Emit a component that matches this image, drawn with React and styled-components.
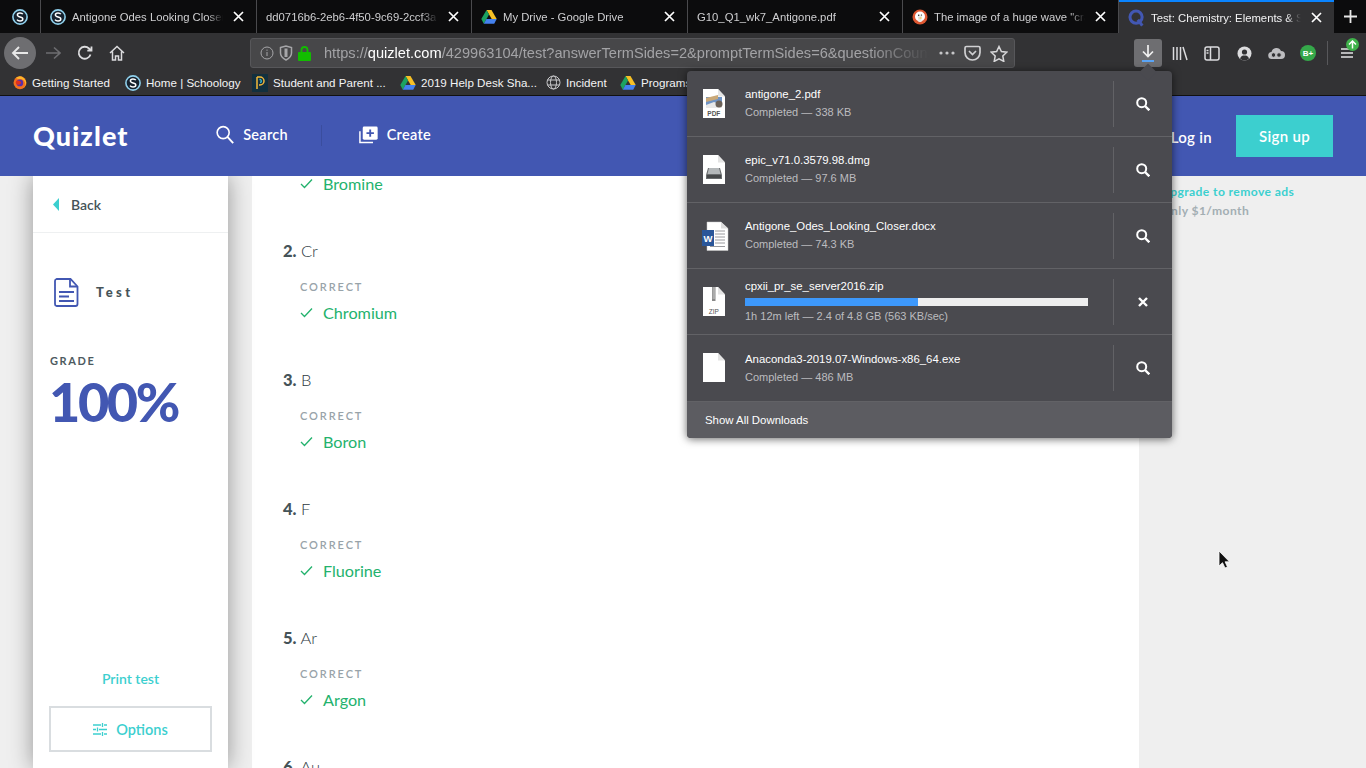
import React from 'react';
import styled, { createGlobalStyle } from 'styled-components';

const Global = createGlobalStyle`
  html, body { margin: 0; padding: 0; width: 1366px; height: 768px; overflow: hidden; background: #efefef; }
  #root { width: 1366px; height: 768px; }
  * { box-sizing: border-box; }
`;

const UI = `"Liberation Sans", Arial, sans-serif`;
const QZ = `Lato, "Open Sans", sans-serif`;

const Shell = styled.div`position: relative; width: 1366px; height: 768px; overflow: hidden; display: flex; flex-direction: column;`;

/* tabs */
const TabStrip = styled.div`height: 33px; flex: none; display: flex; background: #0c0c0d; font: 11.3px ${UI}; color: #cfcfd1;`;
const PinnedTab = styled.div`width: 41px; display: flex; align-items: center; justify-content: center; border-right: 1px solid #4a4a4d;`;
const Tab = styled.div`
  width: ${p => p.$w || 215}px; flex: none; display: flex; align-items: center; gap: 6px; padding: 0 12px 0 9px;
  border-right: ${p => p.$active ? 'none' : '1px solid #4a4a4d'};
  background: ${p => p.$active ? '#323234' : 'transparent'};
  border-top: ${p => p.$active ? '2px solid #0a84ff' : 'none'};
  color: ${p => p.$active ? '#f2f2f3' : '#cfcfd1'};
`;
const TabTitle = styled.span`
  flex: 1; min-width: 0; white-space: nowrap; overflow: hidden; margin-right: 4px;
  -webkit-mask-image: linear-gradient(90deg, #000 90%, transparent);
  mask-image: linear-gradient(90deg, #000 90%, transparent);
`;
const NewTab = styled.div`flex: 1; display: flex; align-items: center; justify-content: center;`;

/* toolbar */
const Toolbar = styled.div`height: 37px; flex: none; display: flex; align-items: center; padding-top: 3px; background: #323234; position: relative;`;
const NavGroup = styled.div`width: 250px; flex: none; display: flex; align-items: center; padding-left: 4px;`;
const NavBtn = styled.div`
  width: ${p => p.$w || 32}px; height: 32px; flex: none; display: flex; align-items: center; justify-content: center;
  border-radius: 50%; background: ${p => p.$circle ? '#6e6e71' : 'transparent'};
`;
const UrlBar = styled.div`
  width: 765px; height: 30px; flex: none; display: flex; align-items: center; padding: 0 6px 0 9px;
  background: #474749; border: 1px solid #57575a; border-radius: 3px; font: 14.6px ${UI}; color: #a3a3a6;
`;
const UrlIcons = styled.div`display: flex; align-items: center; gap: 5px; width: 64px; flex: none;`;
const UrlText = styled.div`
  flex: 1; min-width: 0; white-space: nowrap; overflow: hidden;
  -webkit-mask-image: linear-gradient(90deg, #000 90%, transparent);
  mask-image: linear-gradient(90deg, #000 90%, transparent);
  b { color: #fff; font-weight: 400; }
`;
const UrlActions = styled.div`display: flex; align-items: center; gap: 9px; margin-left: 10px; flex: none;`;
const ToolIcons = styled.div`flex: 1; display: flex; align-items: center; padding-left: 119px;`;
const ToolBtn = styled.div`
  width: ${p => p.$w || 32}px; height: 28px; flex: none; display: flex; align-items: center; justify-content: center; position: relative;
  border-radius: 3px;
  ${p => p.$active && 'width: 28px; background: #6e6e71; margin-right: 2px;'}
`;
const Sep = styled.div`width: 1px; height: 24px; background: #58585b; margin: 0 7px 0 3px;`;
const Badge = styled.div`position: absolute; top: -1px; right: 0; width: 13px; height: 13px; border-radius: 50%; background: #3fb24a; display: flex; align-items: center; justify-content: center;`;

/* bookmarks */
const Bookmarks = styled.div`height: 26px; flex: none; display: flex; align-items: center; padding-left: 13px; background: #323234; border-bottom: 1px solid #111; font: 11.6px ${UI}; color: #f4f4f5; white-space: nowrap;`;
const Bookmark = styled.div`display: flex; align-items: center; gap: 5px; width: ${p => p.$w}px; flex: none;`;

/* page */
const Header = styled.header`height: 80px; flex: none; display: flex; align-items: center; background: #4257b2; color: #fff; font: 600 14.5px ${QZ}; padding: 0 33px 0 33px; letter-spacing: .3px;`;
const Logo = styled.div`font: 900 27px ${QZ}; width: 183px; flex: none; letter-spacing: 1.1px; margin-top: -2px;`;
const HeadLink = styled.div`display: flex; align-items: center; gap: 9px; flex: none; width: ${p => p.$w}px; margin-top: -3px;`;
const HeadDivider = styled.div`width: 1px; height: 21px; background: #3a4d9e; margin: -2px 37px 0 33px;`;
const HeadSpacer = styled.div`flex: 1;`;
const Login = styled.div`margin-right: 24px; font-size: 15px; margin-top: 2px;`;
const SignUp = styled.div`width: 97px; height: 42px; background: #3ccfcf; display: flex; align-items: center; justify-content: center; font-size: 15px;`;

const Page = styled.div`flex: 1; min-height: 0; overflow: hidden; display: grid; grid-template-columns: 195px 911px 1fr; padding-left: 33px; background: #efefef; font-family: ${QZ};`;
const Side = styled.aside`position: relative; display: flex; flex-direction: column; background: #fff; box-shadow: 0 0 22px rgba(0,0,0,.38);`;
const SideBack = styled.div`height: 57px; flex: none; display: flex; align-items: center; gap: 12px; padding-left: 20px; border-bottom: 1px solid #eef0f1; font: 600 14px ${QZ}; color: #455358;`;
const SideTitle = styled.div`display: flex; align-items: center; gap: 17px; padding: 45px 0 0 21px; font: 900 13px/27px ${QZ}; letter-spacing: 3.4px; color: #455358;`;
const GradeLabel = styled.div`margin: 47px 0 0 17px; font: 700 11px ${QZ}; letter-spacing: 1.6px; color: #4d5a60;`;
const Grade = styled.div`margin: 6px 0 0 16px; font: 900 54px/57px ${QZ}; color: #4257b2; letter-spacing: -2.4px;`;
const SideBottom = styled.div`margin-top: auto; padding: 0 16px 16px; display: flex; flex-direction: column; align-items: center;`;
const PrintLink = styled.div`font: 600 14px ${QZ}; color: #3ccfcf; margin-bottom: 19px;`;
const OptionsBtn = styled.div`width: 163px; height: 46px; border: 2px solid #d9dde0; display: flex; align-items: center; justify-content: center; gap: 9px; font: 600 14.5px ${QZ}; color: #3ccfcf;`;

const Main = styled.main`background: #fff; margin-left: 24px; width: 887px; padding-left: 31px; display: flex; flex-direction: column; gap: 46px; overflow: hidden;`;
const Question = styled.section`display: flex; flex-direction: column; flex: none;`;
const QTitle = styled.div`height: 24px; line-height: 26px; font-size: 16.5px; color: #2e3a3f; font-weight: 300; b { font-weight: 900; color: #455358; }`;
const CorrectLabel = styled.div`height: 14px; line-height: 14px; margin: 18px 0 11px 17px; font-size: 11px; font-weight: 600; letter-spacing: 1.9px; color: #98a3a9;`;
const Answer = styled.div`height: 16px; line-height: 16px; margin-left: 17px; display: flex; align-items: center; gap: 10px; font-size: 16.2px; color: #23b26d; font-weight: 400;`;

const Aside = styled.aside`padding: 6px 0 0 22px; font: 700 12.1px/19px ${QZ}; letter-spacing: .4px;`;
const Upgrade = styled.div`color: #3ccfcf;`;
const Price = styled.div`color: #a3aeb3;`;

/* download popup */
const Popup = styled.div`position: absolute; left: 687px; top: 71px; width: 485px; height: 367px; background: #4a4a4f; border-radius: 4px; box-shadow: 0 1px 8px rgba(0,0,0,.6); font: 11.4px ${UI}; color: #fff; display: flex; flex-direction: column; z-index: 5;`;
const PopupArrow = styled.div`position: absolute; left: 455px; top: -5px; width: 12px; height: 12px; background: #4a4a4f; transform: rotate(45deg);`;
const DlRow = styled.div`height: 66px; flex: none; display: flex; align-items: center; position: relative; border-bottom: 1px solid #626266; &:nth-of-type(6) { height: 67px; }`;
const DlIcon = styled.div`width: 58px; padding-left: 15px; flex: none; display: flex;`;
const DlInfo = styled.div`width: 368px; flex: none; display: flex; flex-direction: column; gap: ${p => p.$progress ? 0 : 5}px; margin-top: ${p => p.$progress ? -1 : 0}px;`;
const DlName = styled.div`line-height: 13px; white-space: nowrap;`;
const DlStatus = styled.div`line-height: 13px; font-size: 11px; color: #bcbcbf; white-space: nowrap;`;
const Progress = styled.div`width: 343px; height: 8px; background: #eee; margin: 5px 0 4px;`;
const ProgressFill = styled.div`height: 100%; background: #3d98fb;`;
const DlAction = styled.div`height: 46px; flex: 1; display: flex; align-items: center; justify-content: center; border-left: 1px solid #626266;`;
const PopupFooter = styled.div`flex: 1; display: flex; align-items: center; padding-left: 18px; background: #5c5c61; border-radius: 0 0 4px 4px;`;
const Cursor = styled.svg`position: absolute; left: 1218px; top: 550px; z-index: 6;`;

/* icons */
const Schoology = ({ s = 16 }) => (
  <svg width={s} height={s} viewBox="0 0 16 16" style={{ flex: 'none' }}>
    <circle cx="8" cy="8" r="7.1" fill="#16222e" stroke="#8fd0ec" strokeWidth="1.6" />
    <path d="M10.8 5.2C10.2 4.3 9.2 4 8 4 6.5 4 5.4 4.8 5.4 6c0 2.6 5.4 1.4 5.4 4 0 1.3-1.2 2-2.8 2-1.4 0-2.4-.5-3-1.4" fill="none" stroke="#fff" strokeWidth="1.5" />
  </svg>
);
const Drive = ({ s = 16 }) => (
  <svg width={s} height={s} viewBox="0 0 16 15" style={{ flex: 'none' }}>
    <polygon points="5.5,0.5 10.5,0.5 15.7,9.6 10.7,9.6" fill="#f6c025" />
    <polygon points="5.5,0.5 0.3,9.6 2.8,14.2 8,5" fill="#1ca261" />
    <polygon points="2.8,14.2 13.2,14.2 15.7,9.6 5.4,9.6" fill="#4481ee" />
  </svg>
);
const FirefoxIcon = () => (
  <svg width="14" height="15" viewBox="0 0 16 16" style={{ flex: 'none' }}>
    <circle cx="8" cy="8.3" r="7.4" fill="#f2711f" />
    <path d="M3 2c1 2 3 2 5 2 4 0 6 3 6 6 0 2-1 3-2 4 3-2 3.500-6 2.500-8C13 3 10 .5 7 1 5 1.300 4 2.800 3 2Z" fill="#fdb62a" />
    <circle cx="7.800" cy="8.500" r="3.900" fill="#5a2fa8" />
    <path d="M4 6c2-1 4 0 5 1.500S7 12 4.500 10 3.500 7 4 6Z" fill="#e0301e" />
  </svg>
);
const PowerSchool = () => (
  <svg width="16" height="18" viewBox="0 0 16 18" style={{ flex: 'none' }}>
    <rect width="16" height="18" fill="#12303f" />
    <path d="M5 3v12M5 3h3a4 4 0 0 1 0 8H7" fill="none" stroke="#f4b93a" strokeWidth="1.500" />
    <path d="M7.500 5.500h.7a1.700 1.700 0 0 1 0 3.200" fill="none" stroke="#39c0d8" strokeWidth="1.300" />
  </svg>
);
const Globe = () => (
  <svg width="15" height="15" viewBox="0 0 15 15" fill="none" stroke="#c8c8ca" strokeWidth="1" style={{ flex: 'none' }}>
    <circle cx="7.500" cy="7.500" r="6.500" /><ellipse cx="7.500" cy="7.500" rx="3" ry="6.500" />
    <path d="M1.500 5h12M1.500 10h12" />
  </svg>
);
const Duck = () => (
  <svg width="16" height="16" viewBox="0 0 16 16" style={{ flex: 'none' }}>
    <circle cx="8" cy="8" r="7.500" fill="#de5833" />
    <circle cx="8" cy="7.500" r="5" fill="#fff" />
    <path d="M6 5.500c-1 2 .5 4 .5 7.500h3c.5-2 0-3-1-4 1-.5 2-1 1.500-3.500Z" fill="#e9e9e9" />
    <path d="M6.500 9l3-.7v1.500Z" fill="#f5c02c" />
    <circle cx="6.700" cy="6.300" r=".7" fill="#222" /><circle cx="9.500" cy="6" r=".6" fill="#222" />
  </svg>
);
const QIcon = () => (
  <svg width="17" height="18" viewBox="0 0 19 20" style={{ flex: 'none' }} fill="none">
    <circle cx="9" cy="9" r="6.800" stroke="#4257b2" strokeWidth="3.400" />
    <path d="M11 12l5 6.500" stroke="#4257b2" strokeWidth="3.400" />
  </svg>
);
const Close = ({ c = '#fff' }) => (
  <svg width="11" height="11" viewBox="0 0 11 11" style={{ flex: 'none' }}><path d="M1 1l9 9M10 1l-9 9" stroke={c} strokeWidth="1.700" /></svg>
);
const Stroke = ({ w = 16, h = 16, vb, c = '#e3e3e5', sw = 1.600, children }) => (
  <svg width={w} height={h} viewBox={vb || `0 0 ${w} ${h}`} fill="none" stroke={c} strokeWidth={sw} style={{ flex: 'none' }}>{children}</svg>
);
const SearchGlyph = () => (
  <svg width="14" height="14" viewBox="0 0 14 14" fill="none" stroke="#fff" strokeWidth="2"><circle cx="5.700" cy="5.700" r="4.500" /><path d="M9 9l4.300 4.300" strokeWidth="2.400" /></svg>
);
const CancelGlyph = () => (
  <svg width="10" height="10" viewBox="0 0 10 10"><path d="M1 1l8 8M9 1L1 9" stroke="#fff" strokeWidth="2.400" /></svg>
);
const PageFile = ({ children }) => (
  <svg width="24" height="30" viewBox="0 0 24 30">
    <path d="M0 0h15l7 7.500v21.500H0Z" fill="#fff" transform="translate(1 0)" />
    <path d="M16 0v7.500h7" fill="#e4e4e4" />
    {children}
  </svg>
);
const PdfFile = () => (
  <PageFile>
    <rect x="4" y="8" width="16" height="11" fill="#6f93c4" />
    <path d="M4 9l12-3v4l-12 3Z" fill="#c9a878" />
    <path d="M4 16l8-3 8 3v3H4Z" fill="#e8e8e8" />
    <circle cx="17" cy="15" r="3.500" fill="#6b6158" />
    <text x="11.800" y="27" fontSize="6.500" fontWeight="700" textAnchor="middle" fill="#555" fontFamily="Liberation Sans">PDF</text>
  </PageFile>
);
const DmgFile = () => (
  <PageFile>
    <path d="M6 13h12l2 7v4H4v-4Z" fill="#6a6d6f" />
    <path d="M7 13h10l1.500 6h-13Z" fill="#b4b8ba" />
    <rect x="5" y="20" width="14" height="3" fill="#47494b" />
  </PageFile>
);
const DocFile = () => (
  <svg width="27" height="30" viewBox="0 0 27 30">
    <path d="M5 1h14l7 6.500v22H5Z" fill="#fff" stroke="#c9c9c9" strokeWidth=".5" />
    <path d="M19 1v6.500h7" fill="#ddd" />
    <path d="M13 10h10M13 13h10M13 16h10M13 19h10M13 22h10M8 25.500h15" stroke="#9a9a9e" strokeWidth="1" />
    <rect x="0" y="9" width="12" height="16" fill="#2a5699" />
    <text x="6" y="20.500" fontSize="9.500" fontWeight="700" textAnchor="middle" fill="#fff" fontFamily="Liberation Sans">W</text>
  </svg>
);
const ZipFile = () => (
  <PageFile>
    <rect x="10" y="0" width="3.500" height="14" fill="#888" />
    <path d="M10.500 1h2.500M10.500 3h2.500M10.500 5h2.500M10.500 7h2.500M10.500 9h2.500M10.500 11h2.500" stroke="#eee" strokeWidth=".7" />
    <text x="11.800" y="27" fontSize="6.500" textAnchor="middle" fill="#555" fontFamily="Liberation Sans">ZIP</text>
  </PageFile>
);
const Check = () => (
  <svg width="13" height="11" viewBox="0 0 13 11" fill="none" stroke="#23b26d" strokeWidth="1.300" style={{ flex: 'none', marginTop: -2 }}><path d="M1 6l3.500 3.500L12 1.500" /></svg>
);

const tabs = [
  { icon: <Schoology />, title: 'Antigone Odes Looking Closer', w: 216 },
  { title: 'dd0716b6-2eb6-4f50-9c69-2ccf3a', w: 215 },
  { icon: <Drive />, title: 'My Drive - Google Drive', w: 216 },
  { title: 'G10_Q1_wk7_Antigone.pdf', w: 215 },
  { icon: <Duck />, title: 'The image of a huge wave "crash', w: 216 },
  { icon: <QIcon />, title: 'Test: Chemistry: Elements & Symbols', w: 215, active: true },
];
const marks = [
  { icon: <FirefoxIcon />, label: 'Getting Started', w: 112 },
  { icon: <Schoology />, label: 'Home | Schoology', w: 127 },
  { icon: <PowerSchool />, label: 'Student and Parent ...', w: 148 },
  { icon: <Drive />, label: '2019 Help Desk Sha...', w: 146 },
  { icon: <Globe />, label: 'Incident', w: 74 },
  { icon: <Drive />, label: 'Programs', w: 80 },
];
const questions = [
  ['2.', 'Cr', 'Chromium'], ['3.', 'B', 'Boron'], ['4.', 'F', 'Fluorine'], ['5.', 'Ar', 'Argon'], ['6.', 'Au', 'Gold'],
];
const downloads = [
  { icon: <PdfFile />, name: 'antigone_2.pdf', status: 'Completed — 338 KB' },
  { icon: <DmgFile />, name: 'epic_v71.0.3579.98.dmg', status: 'Completed — 97.6 MB' },
  { icon: <DocFile />, name: 'Antigone_Odes_Looking_Closer.docx', status: 'Completed — 74.3 KB' },
  { icon: <ZipFile />, name: 'cpxii_pr_se_server2016.zip', status: '1h 12m left — 2.4 of 4.8 GB (563 KB/sec)', progress: 50.5 },
  { icon: <PageFile />, name: 'Anaconda3-2019.07-Windows-x86_64.exe', status: 'Completed — 486 MB' },
];

export default function App() {
  return (
    <Shell>
      <Global />
      <TabStrip>
        <PinnedTab><Schoology /></PinnedTab>
        {tabs.map(t => (
          <Tab key={t.title} $w={t.w} $active={t.active}>
            {t.icon}
            <TabTitle>{t.title}</TabTitle>
            <Close />
          </Tab>
        ))}
        <NewTab>
          <svg width="13" height="13" viewBox="0 0 13 13"><path d="M6.500 0v13M0 6.500h13" stroke="#e8e8e8" strokeWidth="1.800" /></svg>
        </NewTab>
      </TabStrip>

      <Toolbar>
        <NavGroup>
          <NavBtn $circle>
            <Stroke w={18} h={16} c="#e8e8e8" sw={1.900}><path d="M17 8H2M8 2L2 8l6 6" /></Stroke>
          </NavBtn>
          <NavBtn $w={33}><Stroke w={16} h={14} c="#6d6d70" sw={1.600}><path d="M1 7h14M9 1.500L15 7l-6 5.500" /></Stroke></NavBtn>
          <NavBtn><Stroke w={16} h={16} c="#dcdcde" sw={1.800}><path d="M13.500 9.500a6 6 0 1 1-1.500-6l2 2M14.500 1.500v4.200h-4.200" /></Stroke></NavBtn>
          <NavBtn><Stroke w={16} h={16} c="#dcdcde" sw={1.500}><path d="M1 8l7-6.500L15 8M3.500 6.500V15h3v-4h3v4h3V6.500" /></Stroke></NavBtn>
        </NavGroup>
        <UrlBar>
          <UrlIcons>
            <Stroke w={14} h={14} c="#a6a6a9" sw={1}><circle cx="7" cy="7" r="6" /><path d="M7 6v4M7 3.600v1.200" /></Stroke>
            <Stroke w={14} h={16} c="#a6a6a9" sw={1.500}><path d="M1.500 2.500L7 1l5.500 1.500V8c0 3-2.500 5.500-5.500 7-3-1.500-5.500-4-5.500-7Z" /><path d="M7 3.500V12" strokeWidth="3" /></Stroke>
            <svg width="13" height="15" viewBox="0 0 13 15"><rect y="6" width="13" height="9" rx="1" fill="#12bc00" /><path d="M3.500 6.500V4a3 3 0 0 1 6 0v2.500" fill="none" stroke="#12bc00" strokeWidth="1.800" /></svg>
          </UrlIcons>
          <UrlText>https://<b>quizlet.com</b>/429963104/test?answerTermSides=2&amp;promptTermSides=6&amp;questionCount=20&amp;questionTypes=4</UrlText>
          <UrlActions>
            <Stroke w={16} h={4} c="#c6c6c8" sw={0}><g fill="#c6c6c8"><circle cx="2" cy="2" r="1.600" /><circle cx="8" cy="2" r="1.600" /><circle cx="14" cy="2" r="1.600" /></g></Stroke>
            <Stroke w={17} h={16} c="#d0d0d2" sw={1.700}><path d="M1 3a1.500 1.500 0 0 1 1.500-1.500h12A1.500 1.500 0 0 1 16 3v4.500a7.500 7.500 0 0 1-15 0Z" /><path d="M5 6l3.500 3.500L12 6" /></Stroke>
            <Stroke w={18} h={17} c="#d8d8da" sw={1.500}><path d="M9 1.500l2.400 5 5.400.7-4 3.800 1 5.400L9 13.800l-4.800 2.600 1-5.400-4-3.800 5.400-.7Z" /></Stroke>
          </UrlActions>
        </UrlBar>
        <ToolIcons>
          <ToolBtn $active>
            <Stroke w={14} h={18} c="#f0f0f0" sw={1.700}><path d="M7 1v11M2 7.500L7 12.500l5-5" /><path d="M1 17h12" stroke="#5aa4f5" strokeWidth="2" /></Stroke>
          </ToolBtn>
          <ToolBtn><Stroke w={16} h={15} c="#dcdcde" sw={1.500}><path d="M1.500 1v13M5 1v13M8.500 1v13M11 1l4 13" /></Stroke></ToolBtn>
          <ToolBtn><Stroke w={16} h={15} c="#dcdcde" sw={1.500}><rect x="1" y="1" width="14" height="13" rx="2" /><path d="M6.500 1v13M2.500 4.500h2M2.500 7h2" /></Stroke></ToolBtn>
          <ToolBtn><svg width="15" height="15" viewBox="0 0 15 15"><circle cx="7.500" cy="7.500" r="7" fill="#dcdcde" /><circle cx="7.500" cy="6" r="2.600" fill="#323234" /><path d="M3 12.500c1-2.500 2.500-3 4.500-3s3.500.5 4.500 3a6 6 0 0 1-9 0Z" fill="#323234" /></svg></ToolBtn>
          <ToolBtn><svg width="17" height="14" viewBox="0 0 17 14"><path d="M4 13a3.500 3.500 0 0 1-.5-7 5 5 0 0 1 9.500-1 4 4 0 0 1 0 8Z" fill="#bdbdc0" /><circle cx="5.500" cy="9" r="2.300" fill="#323234" stroke="#bdbdc0" /><circle cx="11" cy="9" r="2.300" fill="#323234" stroke="#bdbdc0" /></svg></ToolBtn>
          <ToolBtn><svg width="16" height="16" viewBox="0 0 16 16"><circle cx="8" cy="8" r="8" fill="#35a84a" /><text x="8" y="11" fontSize="8" fontWeight="700" textAnchor="middle" fill="#fff" fontFamily="Liberation Sans">B+</text></svg></ToolBtn>
          <Sep />
          <ToolBtn $w={24}>
            <Stroke w={14} h={12} c="#e3e3e5" sw={1.500}><path d="M1 2h12M1 6h12M1 10h12" /></Stroke>
            <Badge><svg width="9" height="9" viewBox="0 0 9 9" fill="none" stroke="#fff" strokeWidth="1.500"><path d="M4.500 8.500V1M1 4.500L4.500 1 8 4.500" /></svg></Badge>
          </ToolBtn>
        </ToolIcons>
      </Toolbar>

      <Bookmarks>
        {marks.map(m => <Bookmark key={m.label} $w={m.w}>{m.icon}{m.label}</Bookmark>)}
      </Bookmarks>

      <Header>
        <Logo>Quizlet</Logo>
        <HeadLink $w={72}>
          <svg width="19" height="19" viewBox="0 0 19 19" fill="none" stroke="#fff" strokeWidth="1.700"><circle cx="7.500" cy="7.500" r="6.300" /><path d="M12 12l6 6.500" strokeWidth="2" /></svg>
          Search
        </HeadLink>
        <HeadDivider />
        <HeadLink $w={72}>
          <svg width="20" height="18" viewBox="0 0 20 18"><path d="M1 5v12h14" fill="none" stroke="#fff" strokeWidth="1.600" /><rect x="4" y="0" width="16" height="14" rx="1.500" fill="#fff" /><path d="M12 3v8M8 7h8" stroke="#4257b2" strokeWidth="2" /></svg>
          Create
        </HeadLink>
        <HeadSpacer />
        <Login>Log in</Login>
        <SignUp>Sign up</SignUp>
      </Header>

      <Page>
        <Side>
          <SideBack>
            <svg width="6" height="13" viewBox="0 0 6 13"><path d="M6 0v13L0 6.500Z" fill="#3ccfcf" /></svg>
            Back
          </SideBack>
          <SideTitle>
            <svg width="25" height="29" viewBox="0 0 25 29" fill="none" stroke="#4257b2" strokeWidth="1.800">
              <path d="M2.500 1h14l7 7.500V26a2 2 0 0 1-2 2h-19a2 2 0 0 1-1.500-2V3a2 2 0 0 1 1.500-2Z" />
              <path d="M16 1.500v7h7M5 14h15M5 18.500h10M5 23h15" />
            </svg>
            Test
          </SideTitle>
          <GradeLabel>GRADE</GradeLabel>
          <Grade>100%</Grade>
          <SideBottom>
            <PrintLink>Print test</PrintLink>
            <OptionsBtn>
              <svg width="14" height="13" viewBox="0 0 14 13" fill="none" stroke="#3ccfcf" strokeWidth="1.300"><path d="M0 2h8M11 2h3M9.500 0v4M0 6.500h3M6 6.500h8M4.500 4.500v4M0 11h8M11 11h3M9.500 9v4" /></svg>
              Options
            </OptionsBtn>
          </SideBottom>
        </Side>
        <Main>
          <Question>
            <Answer><Check />Bromine</Answer>
          </Question>
          {questions.map(([n, term, ans]) => (
            <Question key={n}>
              <QTitle><b>{n}</b> {term}</QTitle>
              <CorrectLabel>CORRECT</CorrectLabel>
              <Answer><Check />{ans}</Answer>
            </Question>
          ))}
        </Main>
        <Aside>
          <Upgrade>Upgrade to remove ads</Upgrade>
          <Price>Only $1/month</Price>
        </Aside>
      </Page>

      <Popup>
        <PopupArrow />
        {downloads.map(d => (
          <DlRow key={d.name}>
            <DlIcon>{d.icon}</DlIcon>
            <DlInfo $progress={d.progress}>
              <DlName>{d.name}</DlName>
              {d.progress && <Progress><ProgressFill style={{ width: `${d.progress}%` }} /></Progress>}
              <DlStatus>{d.status}</DlStatus>
            </DlInfo>
            <DlAction>{d.progress ? <CancelGlyph /> : <SearchGlyph />}</DlAction>
          </DlRow>
        ))}
        <PopupFooter>Show All Downloads</PopupFooter>
      </Popup>

      <Cursor width="12" height="19" viewBox="0 0 12 19">
        <path d="M1 1v15l3.500-3.300L7 18l2.500-1-2.400-5.200H11.500Z" fill="#111" stroke="#fff" strokeWidth=".8" />
      </Cursor>
    </Shell>
  );
}
